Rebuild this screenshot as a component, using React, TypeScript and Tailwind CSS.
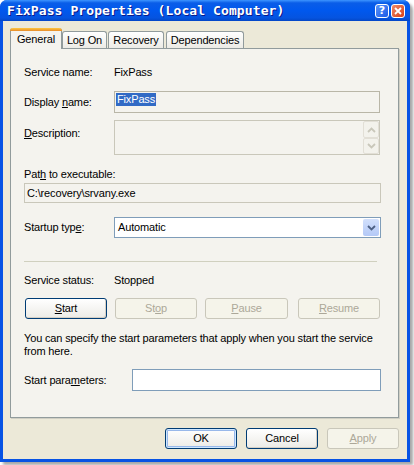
import React from 'react';

type BtnVariant = 'normal' | 'default' | 'disabled';

const U = ({ children }: { children: React.ReactNode }) => (
  <span className="underline underline-offset-[1px] decoration-[1px]">{children}</span>
);

const XpButton = ({ children, variant = 'normal', className = '' }: { children: React.ReactNode; variant?: BtnVariant; className?: string }) => {
  const look =
    variant === 'disabled'
      ? 'border-[#C9C7BA] bg-[#F5F4EA] text-[#ACA899]'
      : variant === 'default'
        ? 'border-[#003C74] bg-[linear-gradient(to_bottom,#ffffff,#ecebe6)] text-black shadow-[inset_0_0_0_1px_#cee7ff,inset_0_0_0_2px_#98b8ea]'
        : 'border-[#003C74] bg-[linear-gradient(to_bottom,#ffffff,#ecebe6)] text-black shadow-[inset_-1px_-1px_0_#d6d0c5]';
  return (
    <div className={`h-[21px] flex items-center justify-center rounded-[3px] border ${look} ${className}`}>
      {children}
    </div>
  );
};

const Chevron = ({ up = false, color }: { up?: boolean; color: string }) => (
  <svg width="9" height="6" viewBox="0 0 9 6">
    <polyline
      points={up ? '1,5 4.5,1.5 8,5' : '1,1 4.5,4.5 8,1'}
      fill="none"
      stroke={color}
      strokeWidth="1.8"
    />
  </svg>
);

const App = () => {
  return (
    <div className="w-[414px] h-[465px] bg-white font-['Liberation_Sans',Arial,sans-serif] text-[11px] tracking-[-0.15px] text-black">
      <div className="w-[410px] h-[462px] flex flex-col rounded-t-[7px] bg-[#0753e4] shadow-[3px_3px_3px_rgba(0,0,0,0.35)]">
        {/* Title bar */}
        <div className="h-[21px] flex items-center pl-[7px] pr-[5px] rounded-t-[7px] bg-[linear-gradient(to_bottom,#3d95ff_0%,#0a5de8_14%,#0058ee_50%,#0554e0_85%,#0446c6_100%)]">
          <span className="font-['DejaVu_Sans_Mono',monospace] font-bold text-[13px] tracking-[0.1px] text-white [text-shadow:1px_1px_0_#0a1a8a] leading-none">
            FixPass Properties (Local Computer)
          </span>
          <div className="ml-auto flex gap-[2px]">
            <div className="w-[14px] h-[14px] rounded-[3px] border border-white bg-[linear-gradient(135deg,#5a94f8,#1b5ae8)] flex items-center justify-center text-white font-bold text-[11px] leading-none font-['DejaVu_Sans',sans-serif] tracking-normal">
              ?
            </div>
            <div className="w-[14px] h-[14px] rounded-[3px] border border-white bg-[linear-gradient(135deg,#ef8a6a,#d63f16)] flex items-center justify-center">
              <svg width="8" height="8" viewBox="0 0 8 8">
                <path d="M1 1 L7 7 M7 1 L1 7" stroke="white" strokeWidth="1.8" />
              </svg>
            </div>
          </div>
        </div>

        {/* Dialog body */}
        <div className="flex-1 mx-[3px] mb-[3px] bg-[#ECE9D8] pt-[8px] pl-[7px] pr-[8px] flex flex-col">
          {/* Tabs */}
          <div className="flex items-end h-[20px] -mb-px relative z-10">
            <div className="w-[52px] h-[21px] bg-[#F4F3EE] border-x border-[#919B9C] rounded-t-[3px] flex flex-col">
              <div className="h-[3px] rounded-t-[3px] bg-[linear-gradient(to_bottom,#ffc73c,#e68b2c)] -mx-px" />
              <div className="flex-1 flex items-center justify-center pb-[1px]">General</div>
            </div>
            <div className="w-[45px] h-[17px] mb-px border-x border-t border-[#919B9C] rounded-t-[3px] bg-[linear-gradient(to_bottom,#ffffff,#ecebe5)] flex items-center justify-center">
              Log On
            </div>
            <div className="w-[56px] ml-px h-[17px] mb-px border-x border-t border-[#919B9C] rounded-t-[3px] bg-[linear-gradient(to_bottom,#ffffff,#ecebe5)] flex items-center justify-center">
              Recovery
            </div>
            <div className="w-[78px] ml-[2px] h-[17px] mb-px border-x border-t border-[#919B9C] rounded-t-[3px] bg-[linear-gradient(to_bottom,#ffffff,#ecebe5)] flex items-center justify-center">
              Dependencies
            </div>
          </div>

          {/* Tab panel */}
          <div className="h-[370px] border border-[#919B9C] bg-[#F4F3EE] pl-[13px] flex flex-col shadow-[1px_1px_0_#d0cfc4]">
            <div className="mt-[16px] h-[14px] flex items-center">
              <span className="w-[90px]">Service name:</span>
              <span>FixPass</span>
            </div>

            <div className="mt-[12px] h-[22px] flex items-center">
              <span className="w-[90px]">Display <U>n</U>ame:</span>
              <div className="w-[266px] h-full border border-[#B9B6A7] flex items-start pt-[1px] pl-[1px]">
                <span className="bg-[#316AC5] text-white px-[1px] leading-[13px]">FixPass</span>
              </div>
            </div>

            <div className="mt-[7px] h-[35px] flex items-start">
              <span className="w-[90px] pt-[5px]"><U>D</U>escription:</span>
              <div className="w-[266px] h-full border border-[#C9C7BA] flex justify-end">
                <div className="w-[16px] flex flex-col">
                  <div className="h-[17px] rounded-[2px] border border-[#E2DFD6] bg-[#F3F2EC] flex items-center justify-center">
                    <Chevron up color="#C9C7BA" />
                  </div>
                  <div className="h-[16px] rounded-[2px] border border-[#E2DFD6] bg-[#F3F2EC] flex items-center justify-center">
                    <Chevron color="#C9C7BA" />
                  </div>
                </div>
              </div>
            </div>

            <div className="mt-[12px] h-[14px] leading-[14px]">
              Pat<U>h</U> to executable:
            </div>
            <div className="mt-[2px] h-[20px] w-[357px] border border-[#C9C7BA] flex items-center pl-[2px]">
              C:\recovery\srvany.exe
            </div>

            <div className="mt-[14px] h-[21px] flex items-center">
              <span className="w-[90px]">Startup typ<U>e</U>:</span>
              <div className="w-[267px] h-full border border-[#7F9DB9] bg-white flex items-center pl-[3px]">
                <span>Automatic</span>
                <div className="ml-auto mr-px w-[16px] h-[17px] rounded-[2px] bg-[linear-gradient(to_bottom,#d2e0fc,#b4c9f7)] flex items-center justify-center">
                  <Chevron color="#4D6185" />
                </div>
              </div>
            </div>

            <div className="mt-[23px] w-[353px] h-px bg-[#D0D0BF]" />

            <div className="mt-[11px] h-[14px] flex items-center">
              <span className="w-[90px]">Service status:</span>
              <span>Stopped</span>
            </div>

            <div className="mt-[11px] flex pl-px">
              <XpButton className="w-[82px]"><U>S</U>tart</XpButton>
              <XpButton variant="disabled" className="w-[82px] ml-[8px]">St<U>o</U>p</XpButton>
              <XpButton variant="disabled" className="w-[83px] ml-[8px]"><U>P</U>ause</XpButton>
              <XpButton variant="disabled" className="w-[82px] ml-[10px]"><U>R</U>esume</XpButton>
            </div>

            <p className="mt-[13px] leading-[13px]">
              You can specify the start parameters that apply when you start the service
              <br />
              from here.
            </p>

            <div className="mt-[11px] h-[22px] flex items-center">
              <span className="w-[108px]">Start para<U>m</U>eters:</span>
              <div className="w-[249px] h-full border border-[#7F9DB9] bg-white" />
            </div>
          </div>

          {/* Bottom buttons */}
          <div className="mt-[10px] flex justify-end gap-[9px]">
            <XpButton variant="default" className="w-[72px]">OK</XpButton>
            <XpButton className="w-[72px]">Cancel</XpButton>
            <XpButton variant="disabled" className="w-[72px]"><U>A</U>pply</XpButton>
          </div>
        </div>
      </div>
    </div>
  );
};

export default App;
